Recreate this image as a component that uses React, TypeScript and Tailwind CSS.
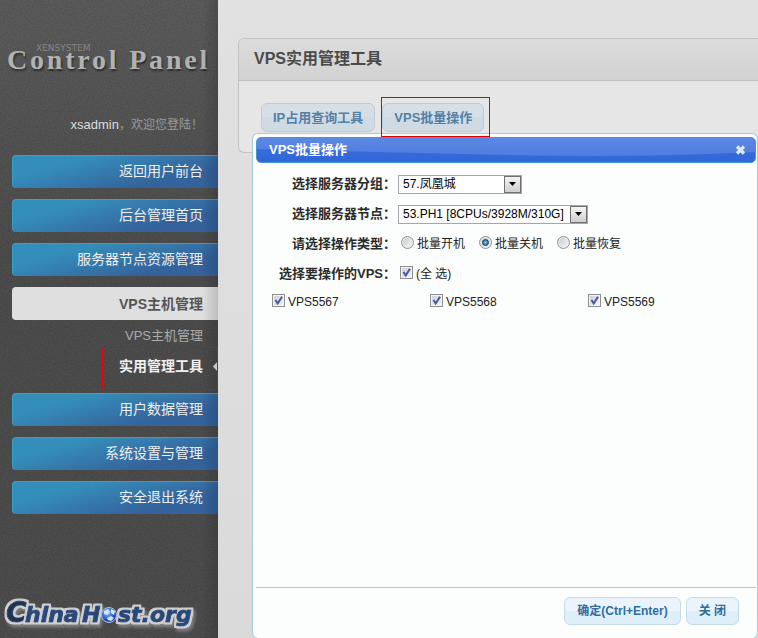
import { useState, type ReactNode } from "react";

const groups = ["57.凤凰城"];
const nodes = ["53.PH1 [8CPUs/3928M/310G]"];
const actions = ["批量开机", "批量关机", "批量恢复"];
const machines = ["VPS5567", "VPS5568", "VPS5569"];

function NavButton({ children, active = false }: { children: ReactNode; active?: boolean }) {
  const base = "flex h-[33px] items-center justify-end rounded-l pr-[15px] text-sm";
  return (
    <a
      href="#"
      className={
        active
          ? `${base} bg-[#dfdfdf] font-bold text-[#555555]`
          : `${base} border-t border-l border-[#36a0c8] bg-linear-165 from-[#348eba] from-25% to-[#34629b] to-75% pb-[2px] text-[#eeeeee]`
      }
    >
      {children}
    </a>
  );
}

function Grain() {
  return (
    <svg className="pointer-events-none absolute inset-0 h-full w-full" aria-hidden="true">
      <filter id="grain">
        <feTurbulence type="fractalNoise" baseFrequency="0.7" numOctaves="2" />
        <feColorMatrix values="0 0 0 0 0  0 0 0 0 0  0 0 0 0 0  0.9 0 0 0 -0.32" />
      </filter>
      <rect width="100%" height="100%" filter="url(#grain)" opacity="0.3" />
    </svg>
  );
}

function HostLogo() {
  return (
    <svg width="206" height="48" viewBox="0 0 206 48" role="img" aria-label="ChinaHost.org">
      <defs>
        <radialGradient id="globe" cx="40%" cy="35%">
          <stop offset="0" stopColor="#9cc4f4" />
          <stop offset="0.6" stopColor="#3f78d8" />
          <stop offset="1" stopColor="#1c49b8" />
        </radialGradient>
        <filter id="logoOutline" x="-5%" y="-20%" width="115%" height="160%">
          <feMorphology in="SourceAlpha" operator="dilate" radius="1.500" result="wide" />
          <feFlood floodColor="#cfd0d2" />
          <feComposite in2="wide" operator="in" result="edge" />
          <feGaussianBlur in="wide" stdDeviation="1.500" result="soft" />
          <feOffset in="soft" dx="2" dy="3" result="moved" />
          <feFlood floodColor="#cccccc" floodOpacity="0.4" />
          <feComposite in2="moved" operator="in" result="shadow" />
          <feMerge>
            <feMergeNode in="shadow" />
            <feMergeNode in="edge" />
            <feMergeNode in="SourceGraphic" />
          </feMerge>
        </filter>
      </defs>
      <g
        filter="url(#logoOutline)"
        fontFamily="'DejaVu Sans', sans-serif"
        fontWeight="700"
        fontStyle="italic"
        fill="#27497a"
        stroke="#27497a"
        strokeWidth="1"
        strokeLinejoin="round"
      >
        <text x="6" y="32" fontSize="28" fill="#1c3658" stroke="#1c3658">C</text>
        <text x="25" y="32" fontSize="22">hina</text>
        <text x="82" y="32" fontSize="22">H</text>
        <text x="118" y="32" fontSize="22">st.org</text>
      </g>
      <circle cx="109" cy="25" r="7.500" fill="url(#globe)" stroke="#a9c4ea" />
      <path d="M104 21l4-2 2 3-3 3-3-1zM111 19l4 2-1 4-3-2zM107 28l4-2 3 2-3 3-3-1z" fill="#d3e5fa" />
    </svg>
  );
}

function Sidebar() {
  return (
    <aside className="relative flex w-[218px] shrink-0 flex-col bg-linear-to-b from-[#5c5c5c] to-[#4d4d4d] to-40%">
      <Grain />
      <div className="pointer-events-none absolute inset-y-0 right-0 z-10 w-4 bg-linear-to-r from-transparent to-black/15" />
      <div className="relative flex grow flex-col">
        <div className="h-[115px] pt-11 pl-[7px]">
          <p className="h-0 pl-[29px] font-['DejaVu_Sans',sans-serif] text-[9px] leading-[9px] text-[#858585]">XENSYSTEM</p>
          <h1 className="font-['Liberation_Serif',serif] text-[28px] leading-[32px] font-bold tracking-widest whitespace-nowrap text-[#b2b2b2] [text-shadow:1px_2px_2px_#2c2c2c]">
            Control Panel
          </h1>
        </div>
        <p className="h-10 pr-[15px] text-right text-xs leading-5 text-[#999999]">
          <a href="#" className="text-[13px] text-[#dddddd]">xsadmin</a>，欢迎您登陆！
        </p>
        <nav className="flex flex-col gap-[11px] pl-3">
          <NavButton>返回用户前台</NavButton>
          <NavButton>后台管理首页</NavButton>
          <NavButton>服务器节点资源管理</NavButton>
          <div>
            <NavButton active>VPS主机管理</NavButton>
            <ul>
              <li>
                <a href="#" className="block pr-[15px] text-right text-[13px] leading-[31px] text-[#aaaaaa]">VPS主机管理</a>
              </li>
              <li className="relative">
                <a href="#" className="block pr-[15px] text-right text-sm leading-[31px] font-bold text-[#f0f0f0]">实用管理工具</a>
                <svg className="absolute top-[10px] right-0" width="5" height="11" viewBox="0 0 5 11" aria-hidden="true">
                  <path d="M5 0v11L0 5.500z" fill="#e6e6e6" />
                </svg>
                <span className="pointer-events-none absolute -top-1 right-0 -bottom-2 z-20 w-29 border border-[#f00000]" />
              </li>
            </ul>
          </div>
          <NavButton>用户数据管理</NavButton>
          <NavButton>系统设置与管理</NavButton>
          <NavButton>安全退出系统</NavButton>
        </nav>
        <div className="mt-auto">
          <HostLogo />
        </div>
      </div>
    </aside>
  );
}

function TabButton({ children }: { children: ReactNode }) {
  return (
    <button
      type="button"
      className="h-[29px] rounded-md border border-[#bccbd8] bg-linear-to-b from-[#d7dfe6] from-50% to-[#cfdbe4] to-50% px-[11px] text-[13px] font-bold whitespace-nowrap text-[#5480a5]"
    >
      {children}
    </button>
  );
}

function DialogButton({ children }: { children: ReactNode }) {
  return (
    <button
      type="button"
      className="h-[28px] rounded-md border border-[#c5dbec] bg-linear-to-b from-[#ebf4fd] from-50% to-[#dfeffa] to-50% px-3 text-xs font-bold whitespace-nowrap text-[#2e6e9e]"
    >
      {children}
    </button>
  );
}

function SelectBox({ id, options, className }: { id: string; options: string[]; className: string }) {
  return (
    <span className={`relative block ${className}`}>
      <select id={id} className="block h-[19px] w-full appearance-none border border-[#a5a5ac] bg-white pr-5 pl-1 text-xs leading-[17px] text-black">
        {options.map((o) => (
          <option key={o}>{o}</option>
        ))}
      </select>
      <span className="pointer-events-none absolute top-px right-px flex h-[17px] w-[17px] items-center justify-center border border-[#707070] bg-linear-to-b from-[#f4f4f4] to-[#cfcfcf]">
        <svg width="7" height="4" viewBox="0 0 7 4" aria-hidden="true">
          <path d="M0 0h7L3.500 4z" fill="#000" />
        </svg>
      </span>
    </span>
  );
}

function Tick({ checked, onChange, children }: { checked: boolean; onChange: () => void; children: ReactNode }) {
  return (
    <label className="flex items-center gap-[3px] text-xs text-[#222222]">
      <span className="relative -mt-1 block h-[13px] w-[13px]">
        <input
          type="checkbox"
          checked={checked}
          onChange={onChange}
          className="peer block h-[13px] w-[13px] appearance-none border border-[#8e8f8f] bg-linear-to-br from-[#c9ccd2] to-[#f6f6f6] shadow-[inset_0_0_0_1px_#f4f4f4]"
        />
        <svg className="pointer-events-none absolute inset-0 hidden peer-checked:block" width="13" height="13" viewBox="0 0 13 13" aria-hidden="true">
          <path d="M3.500 6l2.200 3.500L10 2.800" fill="none" stroke="#41599e" strokeWidth="2" />
        </svg>
      </span>
      {children}
    </label>
  );
}

function FormRow({ label, htmlFor, children }: { label: string; htmlFor?: string; children: ReactNode }) {
  const style = "w-[140px] shrink-0 text-right text-[13px] font-bold whitespace-nowrap text-[#2b2b2b]";
  return (
    <div className="flex h-[30px] items-center gap-[2px]">
      {htmlFor ? (
        <label htmlFor={htmlFor} className={style}>{label}</label>
      ) : (
        <span className={style}>{label}</span>
      )}
      {children}
    </div>
  );
}

function BatchDialog() {
  const [action, setAction] = useState("批量关机");
  const [selected, setSelected] = useState(machines);
  const all = selected.length === machines.length;
  const toggle = (m: string) => setSelected((s) => (s.includes(m) ? s.filter((x) => x !== m) : [...s, m]));
  return (
    <section
      role="dialog"
      aria-label="VPS批量操作"
      className="absolute top-[133px] right-0 bottom-0 left-[34px] flex flex-col rounded-md border border-b-0 border-[#a6c9e2] bg-[#fcfdfd] pt-[3px] pr-px pl-[3px]"
    >
      <header className="relative flex h-[26px] shrink-0 items-center justify-between overflow-hidden rounded-[5px] border border-[#4297d7] bg-linear-to-b from-[#4072de] to-[#3066d8] pr-[9px] pl-3 text-white">
        <svg className="absolute inset-0 h-full w-full" viewBox="0 0 500 24" preserveAspectRatio="none" aria-hidden="true">
          <defs>
            <linearGradient id="gloss" x2="0" y2="1">
              <stop offset="0" stopColor="#5c88e4" />
              <stop offset="1" stopColor="#4f7ddf" />
            </linearGradient>
          </defs>
          <path d="M0 0H500V14Q380 20 250 17T0 11Z" fill="url(#gloss)" />
        </svg>
        <h3 className="relative text-[13px] font-bold">VPS批量操作</h3>
        <button type="button" aria-label="关闭窗口" className="relative">
          <svg width="11" height="10" viewBox="0 0 11 10" aria-hidden="true">
            <path d="M2 1.500l7 7M9 1.500l-7 7" stroke="#dfe9fb" strokeWidth="3.200" />
          </svg>
        </button>
      </header>
      <form className="flex grow flex-col pt-[6px]">
        <FormRow label="选择服务器分组：" htmlFor="group">
          <SelectBox id="group" options={groups} className="w-[124px]" />
        </FormRow>
        <FormRow label="选择服务器节点：" htmlFor="node">
          <SelectBox id="node" options={nodes} className="w-[190px]" />
        </FormRow>
        <FormRow label="请选择操作类型：">
          <div className="flex gap-[14px] pl-[3px]">
            {actions.map((a) => (
              <label key={a} className="flex items-center gap-[3px] text-xs whitespace-nowrap text-[#222222]">
                <span className="relative -mt-1 block h-[13px] w-[13px]">
                  <input
                    type="radio"
                    name="action"
                    checked={action === a}
                    onChange={() => setAction(a)}
                    className="peer block h-[13px] w-[13px] appearance-none rounded-full border border-[#8e8f8f] bg-linear-to-br from-[#c4c7cc] to-[#f8f8f8] shadow-[inset_0_0_0_1px_#eeeeee]"
                  />
                  <span className="pointer-events-none absolute top-[3px] left-[3px] hidden h-[7px] w-[7px] rounded-full border border-[#173a52] bg-radial from-[#6fd0f0] to-[#0e5a86] peer-checked:block" />
                </span>
                {a}
              </label>
            ))}
          </div>
        </FormRow>
        <FormRow label="选择要操作的VPS：">
          <div className="pl-[2px]">
            <Tick checked={all} onChange={() => setSelected(all ? [] : machines)}>(全 选)</Tick>
          </div>
        </FormRow>
        <div className="flex h-[26px] items-center pl-4">
          {machines.map((m) => (
            <div key={m} className="w-[158px]">
              <Tick checked={selected.includes(m)} onChange={() => toggle(m)}>{m}</Tick>
            </div>
          ))}
        </div>
        <footer className="mt-auto flex h-[51px] justify-end gap-[5px] border-t border-[#a6c9e2] pt-[9px] pr-[17px]">
          <DialogButton>确定(Ctrl+Enter)</DialogButton>
          <DialogButton>关 闭</DialogButton>
        </footer>
      </form>
    </section>
  );
}

export default function App() {
  return (
    <div className="flex min-h-screen bg-[#dadada] font-['Liberation_Sans','Noto_Sans_CJK_SC',sans-serif]">
      <Sidebar />
      <main className="relative min-w-0 grow overflow-hidden bg-linear-to-b from-[#e1e1e1] to-[#dadada] pt-[38px] pl-5">
        <section className="rounded-l-md border border-r-0 border-[#c2c2c2] bg-[#e6e6e6]">
          <h2 className="h-[42px] rounded-tl-md border-b border-[#c0c0c0] bg-linear-to-b from-[#dcdcdc] to-[#d2d2d2] pl-[15px] text-base leading-10 font-bold text-[#4a4a4a]">
            VPS实用管理工具
          </h2>
          <div className="flex h-[71px] items-start gap-[7px] pt-[22px] pl-[22px]">
            <TabButton>IP占用查询工具</TabButton>
            <span className="relative">
              <TabButton>VPS批量操作</TabButton>
              <span className="pointer-events-none absolute -top-[6px] -right-[6px] -bottom-[5px] -left-px z-20 border border-[#e00000]" />
            </span>
          </div>
        </section>
        <BatchDialog />
      </main>
    </div>
  );
}
